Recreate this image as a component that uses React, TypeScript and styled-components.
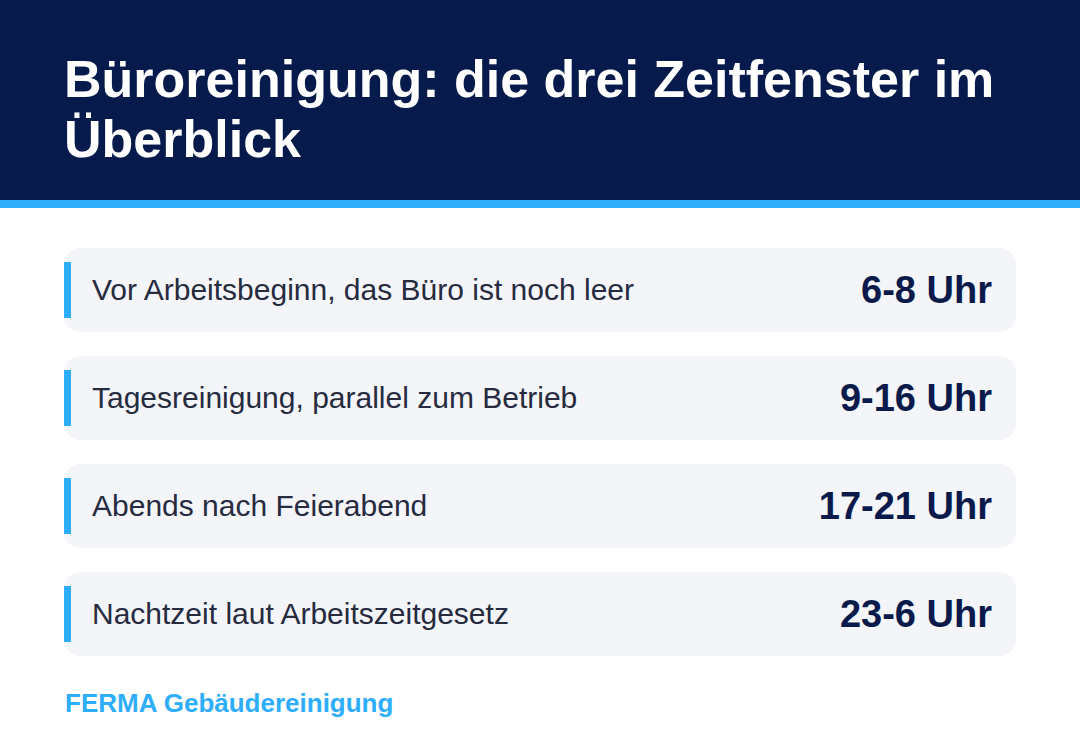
import React from "react";
import styled, { createGlobalStyle } from "styled-components";

const Global = createGlobalStyle`
  html, body { margin: 0; padding: 0; background: #ffffff; }
  body { font-family: "Liberation Sans", Arial, sans-serif; }
  * { box-sizing: border-box; }
`;

const Page = styled.div`
  width: 1080px;
  height: 752px;
  background: #ffffff;
  display: flex;
  flex-direction: column;
  overflow: hidden;
`;

const Header = styled.header`
  background: #061a4b;
  height: 208px;
  border-bottom: 8px solid #2eaefa;
  padding: 49px 64px 0 64px;
`;

const Title = styled.h1`
  margin: 0;
  color: #ffffff;
  font-size: 52px;
  line-height: 60px;
  font-weight: 700;
  letter-spacing: 0;
`;

const List = styled.div`
  display: flex;
  flex-direction: column;
  gap: 24px;
  padding: 40px 64px 0 64px;
`;

const Card = styled.div`
  height: 84px;
  background: #f4f5f9;
  border-radius: 16px;
  display: flex;
  align-items: center;
  justify-content: space-between;
  padding-right: 24px;
`;

const Accent = styled.span`
  width: 7px;
  height: 56px;
  background: #2eaefa;
  flex: none;
`;

const Label = styled.span`
  flex: 1;
  padding-left: 21px;
  font-size: 30px;
  color: #262b40;
`;

const Value = styled.span`
  font-size: 38px;
  font-weight: 700;
  color: #0a1a4a;
`;

const Footer = styled.div`
  padding: 32px 64px 0 65px;
  font-size: 26px;
  font-weight: 700;
  color: #2eaefa;
`;

const rows = [
  ["Vor Arbeitsbeginn, das Büro ist noch leer", "6-8 Uhr"],
  ["Tagesreinigung, parallel zum Betrieb", "9-16 Uhr"],
  ["Abends nach Feierabend", "17-21 Uhr"],
  ["Nachtzeit laut Arbeitszeitgesetz", "23-6 Uhr"],
];

export default function App() {
  return (
    <Page>
      <Global />
      <Header>
        <Title>Büroreinigung: die drei Zeitfenster im Überblick</Title>
      </Header>
      <List>
        {rows.map(([l, v]) => (
          <Card key={v}>
            <Accent />
            <Label>{l}</Label>
            <Value>{v}</Value>
          </Card>
        ))}
      </List>
      <Footer>FERMA Gebäudereinigung</Footer>
    </Page>
  );
}
